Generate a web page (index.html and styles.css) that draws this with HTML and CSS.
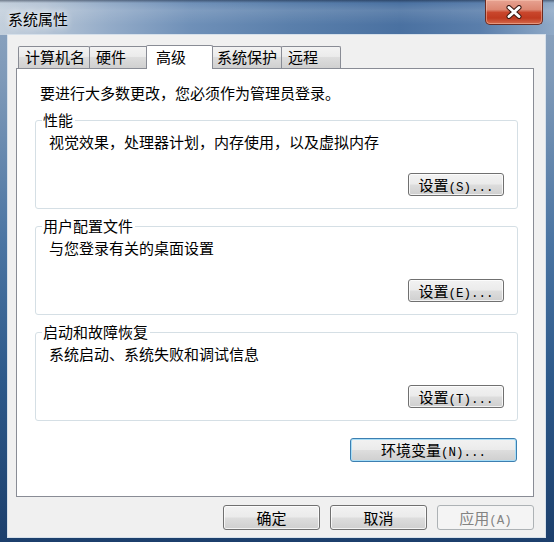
FILE: index.html
```html
<!DOCTYPE html>
<html lang="zh-CN">
<head>
<meta charset="utf-8">
<title>系统属性</title>
<link rel="stylesheet" href="styles.css">
</head>
<body>
<div class="window">
  <div class="titlebar">
    <span class="title">系统属性</span>
    <button class="close" type="button" aria-label="关闭">
      <svg width="18" height="14" viewBox="0 0 18 14">
        <path d="M4 2.5 L14 11.5 M14 2.5 L4 11.5" stroke="#3b1710" stroke-width="5" stroke-linecap="round"/>
        <path d="M4 2.5 L14 11.5 M14 2.5 L4 11.5" stroke="#ffffff" stroke-width="3" stroke-linecap="round"/>
      </svg>
    </button>
  </div>
  <div class="client">
    <div class="tabs">
      <div class="tab">计算机名</div>
      <div class="tab">硬件</div>
      <div class="tab active">高级</div>
      <div class="tab">系统保护</div>
      <div class="tab">远程</div>
    </div>
    <div class="panel">
      <p class="note">要进行大多数更改，您必须作为管理员登录。</p>
      <fieldset class="group">
        <legend>性能</legend>
        <p class="desc">视觉效果，处理器计划，内存使用，以及虚拟内存</p>
        <div class="group-actions"><button class="btn" type="button">设置<span class="mn">(S)...</span></button></div>
      </fieldset>
      <fieldset class="group">
        <legend>用户配置文件</legend>
        <p class="desc">与您登录有关的桌面设置</p>
        <div class="group-actions"><button class="btn" type="button">设置<span class="mn">(E)...</span></button></div>
      </fieldset>
      <fieldset class="group">
        <legend>启动和故障恢复</legend>
        <p class="desc">系统启动、系统失败和调试信息</p>
        <div class="group-actions"><button class="btn" type="button">设置<span class="mn">(T)...</span></button></div>
      </fieldset>
      <div class="env-row"><button class="btn default env" type="button">环境变量<span class="mn">(N)...</span></button></div>
    </div>
    <div class="footer">
      <button class="btn wide" type="button">确定</button>
      <button class="btn wide" type="button">取消</button>
      <button class="btn wide" type="button" disabled>应用<span class="mn">(A)</span></button>
    </div>
  </div>
</div>
</body>
</html>
```
FILE: styles.css
```css
* { box-sizing: border-box; }
html, body { margin: 0; padding: 0; }
body {
  width: 554px;
  height: 542px;
  overflow: hidden;
  font-family: "Noto Sans CJK SC", "Noto Sans", sans-serif;
  font-size: 15px;
  color: #000;
  background: #1d416f;
}
.window {
  width: 554px;
  height: 542px;
  padding: 0 9px 5px 8px;
  display: flex;
  flex-direction: column;
  background: linear-gradient(180deg, #8fa6c1 0%, #7e99b8 15%, #4a74a2 45%, #2d598a 70%, #1c3f6c 100%);
}
.titlebar {
  height: 35px;
  margin: 0 -9px 0 -8px;
  padding-left: 8px;
  display: flex;
  align-items: flex-start;
  justify-content: space-between;
  background:
    linear-gradient(180deg, rgba(10,20,40,.45) 0, rgba(10,20,40,0) 3px, rgba(255,255,255,.12) 30%, rgba(255,255,255,0) 70%),
    linear-gradient(90deg, #c3cfdc 0, #b6c5d6 45px, #93abc8 110px, #6f90b8 190px, #5a7fab 290px, #4a71a1 400px, #5a7eab 480px, #90aac7 554px);
}
.title {
  margin-top: 10px;
  line-height: 18px;
  text-shadow: 0 0 6px rgba(255,255,255,.9), 0 0 10px rgba(255,255,255,.6);
}
.close {
  width: 58px;
  height: 25px;
  margin-right: 11px;
  padding: 0;
  border: 1px solid #6d2a1f;
  border-top: 0;
  border-radius: 0 0 5px 5px;
  background: linear-gradient(180deg, #e7a291 0%, #dc8772 40%, #c9462c 52%, #c03a20 75%, #d56a4d 100%);
  box-shadow: inset 0 0 0 1px rgba(255,210,190,.45);
  display: flex;
  align-items: center;
  justify-content: center;
}
.close svg { display: block; }
.client {
  flex: 1;
  background: #f0f0f0;
  padding: 10px 11px 0 8px;
  display: flex;
  flex-direction: column;
  box-shadow: 0 0 0 1px #d6e0ea;
}
.tabs {
  height: 23px;
  padding-left: 2px;
  display: flex;
  align-items: flex-end;
}
.tab {
  height: 22px;
  min-width: 60px;
  padding: 0 4px 0 6px;
  margin-left: -1px;
  line-height: 20px;
  border: 1px solid #898c95;
  border-bottom: 0;
  border-radius: 2px 2px 0 0;
  background: linear-gradient(180deg, #f3f3f3 0%, #ebebeb 45%, #dddddd 50%, #d0d0d0 100%);
  white-space: nowrap;
}
.tab:first-child { margin-left: 0; }
.tab.active {
  height: 24px;
  min-width: 67px;
  margin: 0 -2px -1px -3px;
  padding-top: 1px;
  padding-left: 9px;
  padding-right: 6px;
  background: #fff;
  position: relative;
  z-index: 1;
}
.panel {
  height: 429px;
  background: #fff;
  border: 1px solid #898c95;
  padding: 15px 15px 0 18px;
  display: flex;
  flex-direction: column;
  gap: 8px;
}
.note {
  margin: 0 0 1px;
  padding-left: 5px;
  line-height: 18px;
}
.group {
  margin: 0;
  padding: 4px 13px 12px 13px;
  border: 1px solid #d5dfe5;
  border-radius: 3px;
  min-inline-size: 0;
}
.group legend {
  margin-left: -7px;
  padding: 0 2px 0 1px;
  line-height: 18px;
}
.desc {
  margin: 0;
  line-height: 18px;
}
.group-actions {
  margin-top: 22px;
  display: flex;
  justify-content: flex-end;
}
.btn {
  font-family: inherit;
  font-size: 15px;
  color: #000;
  width: 96px;
  height: 23px;
  padding: 0;
  line-height: 21px;
  border: 1px solid #707070;
  border-radius: 3px;
  background: linear-gradient(180deg, #f2f2f2 0%, #ebebeb 48%, #dddddd 52%, #cfcfcf 100%);
  box-shadow: inset 0 0 0 1px rgba(255,255,255,.75);
  text-align: center;
  white-space: nowrap;
}
.mn {
  font-family: "Liberation Mono", monospace;
  font-size: 12.5px;
}
.env-row {
  margin-top: 9px;
  padding-right: 1px;
  display: flex;
  justify-content: flex-end;
}
.btn.env { width: 167px; height: 24px; line-height: 22px; }
.btn.default {
  border-color: #3c7fb1;
  box-shadow: inset 0 0 0 1px #a8ddf6;
}
.footer {
  margin-top: 8px;
  display: flex;
  justify-content: flex-end;
  gap: 10px;
}
.btn.wide { width: 97px; height: 25px; line-height: 23px; }
.btn:disabled {
  color: #838383;
  border-color: #adb2b5;
  background: #f4f4f4;
  box-shadow: none;
}
```
